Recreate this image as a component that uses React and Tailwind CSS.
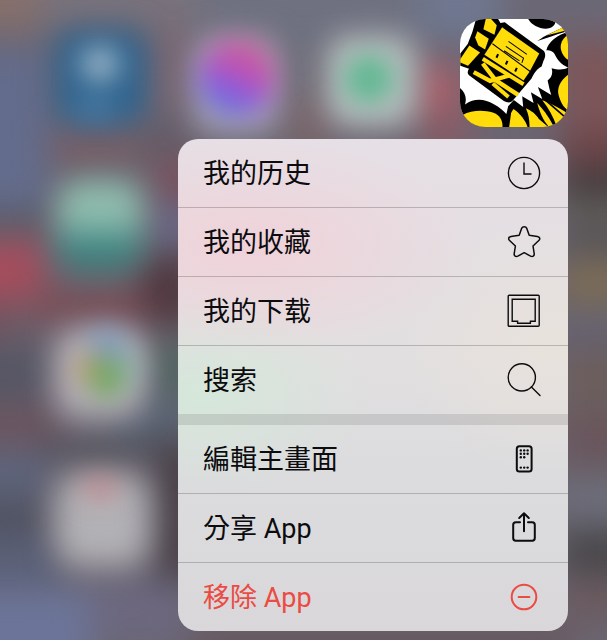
import React from "react";

// Wallpaper patches: [x, y, width, height, colour]
const patches = [
  [-60, -60, 100, 90, "#86706c"],
  [40, -60, 160, 90, "#78727c"],
  [200, -60, 220, 110, "#6f7180"],
  [420, -60, 80, 100, "#6f7890"],
  [500, -60, 170, 90, "#6b6875"],
  [-60, 50, 110, 160, "#636c8c"],
  [150, 30, 40, 80, "#7b6672"],
  [285, 50, 35, 60, "#71707c"],
  [290, 100, 40, 50, "#7d6668"],
  [415, 65, 45, 50, "#b0606a"],
  [420, 110, 50, 50, "#855c66"],
  [560, 40, 110, 90, "#7d5659"],
  [560, 130, 110, 40, "#6b4549"],
  [560, 170, 110, 30, "#403b3d"],
  [560, 200, 110, 25, "#6a655f"],
  [560, 225, 110, 25, "#4e4d54"],
  [560, 255, 110, 55, "#7a6b57"],
  [560, 310, 110, 35, "#646275"],
  [560, 345, 110, 70, "#6c5e5d"],
  [560, 415, 110, 55, "#69565c"],
  [560, 475, 110, 45, "#6c6e7a"],
  [560, 530, 110, 45, "#484649"],
  [560, 580, 110, 40, "#6b5a5e"],
  [50, 135, 95, 25, "#7c5c62"],
  [140, 120, 50, 35, "#625b66"],
  [155, 160, 60, 40, "#7c505b"],
  [150, 205, 50, 40, "#6a6688"],
  [140, 255, 60, 70, "#50383f"],
  [-60, 210, 110, 20, "#565860"],
  [-60, 240, 105, 60, "#a64c5c"],
  [35, 290, 110, 35, "#7a4c54"],
  [-60, 305, 80, 30, "#72505a"],
  [-60, 345, 110, 55, "#565664"],
  [-60, 405, 120, 40, "#6b545f"],
  [150, 345, 40, 45, "#4c645c"],
  [110, 395, 80, 45, "#5a6474"],
  [40, 440, 110, 20, "#505058"],
  [-60, 452, 110, 40, "#5c637b"],
  [-60, 500, 105, 35, "#4c5060"],
  [-60, 540, 120, 45, "#5a6078"],
  [155, 440, 50, 140, "#494047"],
  [-60, 590, 150, 110, "#6c7599"],
  [90, 580, 100, 60, "#6c687f"],
  [190, 625, 380, 60, "#67585f"],
];

function Wallpaper() {
  return (
    <svg
      className="absolute inset-0 h-full w-full"
      viewBox="0 0 607 640"
      preserveAspectRatio="xMidYMid slice"
      aria-hidden="true"
    >
      <defs>
        <filter id="far" x="-20%" y="-20%" width="140%" height="140%" colorInterpolationFilters="sRGB">
          <feGaussianBlur stdDeviation="17" />
        </filter>
        <filter id="near" x="-50%" y="-50%" width="200%" height="200%" colorInterpolationFilters="sRGB">
          <feGaussianBlur stdDeviation="15" />
        </filter>
        <filter id="detail" x="-50%" y="-50%" width="200%" height="200%" colorInterpolationFilters="sRGB">
          <feGaussianBlur stdDeviation="13" />
        </filter>
        <linearGradient id="orb" x1="0.75" y1="0" x2="0.25" y2="1">
          <stop offset="0" stopColor="#d05a90" />
          <stop offset="0.4" stopColor="#c052b4" />
          <stop offset="0.65" stopColor="#8a5ae0" />
          <stop offset="1" stopColor="#5480e0" />
        </linearGradient>
        <linearGradient id="mint" x1="0" y1="0" x2="0" y2="1">
          <stop offset="0" stopColor="#92bfb0" />
          <stop offset="0.5" stopColor="#8dbaac" />
          <stop offset="0.65" stopColor="#478c89" />
          <stop offset="1" stopColor="#387a76" />
        </linearGradient>
      </defs>
      <rect width="607" height="640" fill="#6b6672" />
      <g filter="url(#far)">
        {patches.map(([x, y, w, h, fill]) => (
          <rect key={`${x}-${y}`} x={x} y={y} width={w} height={h} fill={fill} />
        ))}
      </g>
      <g filter="url(#near)">
        <rect x="55" y="30" width="92" height="94" rx="20" fill="#2f648f" />
        <rect x="192" y="35" width="88" height="100" rx="24" fill="#a49eb2" />
        <rect x="326" y="35" width="91" height="92" rx="24" fill="#b9bfc0" />
        <rect x="57" y="180" width="86" height="90" rx="24" fill="url(#mint)" />
        <rect x="55" y="328" width="90" height="90" rx="24" fill="#b5b0b8" />
        <rect x="56" y="474" width="93" height="92" rx="24" fill="#b2b1b5" />
      </g>
      <g filter="url(#detail)">
        <ellipse cx="100" cy="64" rx="20" ry="18" fill="#96b2c6" />
        <ellipse cx="95" cy="108" rx="22" ry="9" fill="#4f80aa" />
        <circle cx="237" cy="78" r="38" fill="url(#orb)" />
        <circle cx="369" cy="79" r="25" fill="#60b892" />
        <ellipse cx="107" cy="344" rx="18" ry="14" fill="#7c98bc" />
        <ellipse cx="87" cy="369" rx="12" ry="15" fill="#bd9c66" />
        <ellipse cx="107" cy="378" rx="17" ry="21" fill="#72a85e" />
        <ellipse cx="130" cy="366" rx="9" ry="20" fill="#8aaeaa" />
        <ellipse cx="100" cy="488" rx="17" ry="8" fill="#d08286" />
      </g>
    </svg>
  );
}

function ComicLogo() {
  return (
    <svg viewBox="60 57 323 323" className="block h-full w-full" role="img" aria-label="App">
      <rect x="60" y="57" width="323" height="323" fill="#fff" />
      {/* burst, top right */}
      <path d="M264 57H346C346 68 344 78 329 84C307 91 275 78 264 57Z" fill="#000" />
      <path d="M348 57H383V76C366 80 353 72 348 57Z" fill="#ffdc0a" />
      <path d="M291 123C316 104 345 94 372 80L374 96C346 103 320 115 291 123Z" fill="#000" />
      <path d="M318 106L372 80L374 92Z" fill="#ffdc0a" />
      <path d="M383 96C352 104 324 125 318 151C329 150 337 153 343 162C350 178 363 194 383 202Z" fill="#000" />
      <path d="M383 105C367 113 358 133 362 149C366 164 374 174 383 179Z" fill="#ffdc0a" />
      {/* burst, lower right */}
      <path d="M383 202C368 211 350 208 334 204C339 221 333 233 322 241C326 258 328 270 333 284L293 260L306 296L272 276L280 308L246 288L249 320L221 299L204 318L190 380H383Z" fill="#000" />
      <g fill="#ffdc0a">
        <path d="M383 224C361 241 349 263 355 285C360 304 369 321 383 330Z" />
        <path d="M220 326C206 344 203 362 206 380H262C256 360 240 340 220 326Z" />
        <path d="M257 324C274 332 286 340 296 356L324 380H268C268 358 265 342 257 324Z" />
        <path d="M291 308C306 324 324 346 338 374L326 380C306 356 298 334 291 308Z" />
        <path d="M306 300C334 310 362 326 383 340V380H350C338 348 324 322 306 300Z" />
      </g>
      <path d="M314 298L376 352" stroke="#000" strokeWidth="5" />
      {/* burst, lower left */}
      <path d="M60 263C75 275 81 293 75 313C105 291 136 298 160 311C179 321 191 332 199 342L216 316L207 380H60Z" fill="#000" />
      <path d="M68 344C94 329 132 328 158 337C180 345 188 361 187 380H60V354Z" fill="#ffdc0a" />
      {/* lettering block */}
      <path d="M108 57H174L181 69L194 67L309 151C317 157 316 171 310 181L304 199C289 207 282 218 274 235L216 303C209 309 199 306 191 302L88 226C81 220 82 213 87 206L61 197V160L83 132L97 96Z" fill="#000" />
      <g fill="#ffdc0a">
        <path d="M137 57H153L170 76L163 104L130 88Z" />
        <path d="M112 94L146 116L135 148L115 136L105 112Z" />
        <path d="M88 136L120 157L84 197L61 187V177Z" />
        <path d="M186 82L297 160L268 215L250 241L133 164Z" />
      </g>
      {/* lower strokes of the lettering */}
      <g stroke="#ffdc0a" fill="none">
        <path d="M128 176L250 252" strokeWidth="12" />
        <path d="M101 216L150 242L208 226" strokeWidth="13" />
        <path d="M128 190L166 240L234 284" strokeWidth="13" />
        <path d="M158 250L205 290" strokeWidth="12" />
      </g>
      <g stroke="#000" strokeWidth="3" fill="none">
        <path d="M157 131L270 214M205 124L260 163M197 139L250 174L245 188M192 152L238 182" />
        <path d="M174 162L169 173M202 182L197 193M230 203L225 214" strokeWidth="6" />
      </g>
    </svg>
  );
}

const line = { fill: "none", stroke: "currentColor", strokeLinecap: "round", strokeLinejoin: "round" };

const ClockIcon = () => (
  <svg viewBox="0 0 36 36" className="size-9" strokeWidth="1.4" {...line}>
    <circle cx="18" cy="18" r="15.6" />
    <path d="M18 7.5V19H25.5" strokeLinecap="butt" strokeLinejoin="miter" />
  </svg>
);
const StarIcon = () => (
  <svg viewBox="0 0 36 36" className="size-9" strokeWidth="1.5" {...line}>
    <path d="M15.6 4.4C16.6 2.2 19.8 2.2 20.8 4.4L23.2 11.3L31.4 12.4C33.9 12.8 34.4 15 32.8 16.5L27 22L28.2 29.6C28.5 32 26.6 33.1 24.6 32.1L18.2 28.7L11.8 32.1C9.8 33.1 7.9 32 8.2 29.6L9.4 22L3.6 16.5C2 15 2.5 12.8 5 12.4L13.2 11.3Z" />
  </svg>
);
const DownloadsIcon = () => (
  <svg viewBox="0 0 36 36" className="size-9" strokeWidth="1.4" {...line}>
    <rect x="2.2" y="2.2" width="31" height="31" rx="1" />
    <path d="M6.2 6.2H29.2V28.2H24.4V30.2H11.6V28.2H6.2Z" strokeLinejoin="miter" />
  </svg>
);
const SearchIcon = () => (
  <svg viewBox="0 0 36 36" className="size-9" strokeWidth="1.4" {...line}>
    <circle cx="15.8" cy="15.4" r="13.6" />
    <path d="M25.4 25L34 33.6" />
  </svg>
);
const PhoneIcon = () => (
  <svg viewBox="0 0 36 36" className="size-9" fill="currentColor">
    <rect x="10.8" y="5.2" width="14.8" height="25.4" rx="2.6" fill="none" stroke="currentColor" strokeWidth="2" />
    {[
      [14.8, 9.4], [18.2, 9.4], [21.6, 9.4],
      [14.8, 12.8], [18.2, 12.8], [21.6, 12.8],
      [14.8, 16.2], [18.2, 16.2],
      [14.8, 26.6], [18.2, 26.6], [21.6, 26.6],
    ].map(([x, y]) => (
      <circle key={`${x}-${y}`} cx={x} cy={y} r="1.2" />
    ))}
  </svg>
);
const ShareIcon = () => (
  <svg viewBox="0 0 36 36" className="size-9" strokeWidth="2" {...line}>
    <path d="M14 12.2H9.8C8.2 12.2 7.2 13.2 7.2 14.8V28C7.2 29.8 8.2 30.8 9.8 30.8H26.2C27.8 30.8 28.8 29.8 28.8 28V14.8C28.8 13.2 27.8 12.2 26.2 12.2H22" />
    <path d="M18 21.2V3.4M13.2 8L18 3.2L22.8 8" />
  </svg>
);
const RemoveIcon = () => (
  <svg viewBox="0 0 36 36" className="size-9" strokeWidth="2" {...line}>
    <circle cx="18" cy="18" r="12.3" />
    <path d="M12.6 18H23.4" />
  </svg>
);

const shortcuts = [
  { label: "我的历史", Icon: ClockIcon },
  { label: "我的收藏", Icon: StarIcon },
  { label: "我的下载", Icon: DownloadsIcon },
  { label: "搜索", Icon: SearchIcon },
];
const systemActions = [
  { label: "編輯主畫面", Icon: PhoneIcon },
  { label: "分享 App", Icon: ShareIcon },
  { label: "移除 App", Icon: RemoveIcon, danger: true },
];

function MenuGroup({ items, lang, font }) {
  return (
    <div role="group" lang={lang} className={`divide-y divide-black/20 ${font}`}>
      {items.map(({ label, Icon, danger }) => (
        <button
          key={label}
          type="button"
          role="menuitem"
          className={`box-content flex h-[68px] w-full items-center ${danger ? "text-[#eb4b42]" : "text-[#0c0c0e]"}`}
        >
          <span className="flex w-full items-center justify-between pl-[25px] pr-[26px]">
            <span className="pt-[2px] text-[27px] leading-9">{label}</span>
            <Icon />
          </span>
        </button>
      ))}
    </div>
  );
}

export default function App() {
  return (
    <main className="relative min-h-screen overflow-hidden bg-[#6b6672]">
      <Wallpaper />
      <div className="relative flex flex-col items-end gap-3 pb-[9px] pl-4 pr-[39px] pt-[19px]">
        <button type="button" className="size-[108px] overflow-hidden rounded-[25px]">
          <ComicLogo />
        </button>
        <div
          role="menu"
          className="w-full max-w-[390px] overflow-hidden rounded-[20px] bg-[#dddcde] bg-[radial-gradient(ellipse_230px_110px_at_18%_22%,#f0d2d9_0%,#f0d2d900_100%),radial-gradient(ellipse_170px_100px_at_6%_52%,#d5e7da_0%,#d5e7da00_100%),radial-gradient(ellipse_150px_130px_at_96%_42%,#e8e2dc_0%,#e8e2dc00_100%),linear-gradient(180deg,#e6dfe5_0%,#e2dfe0_45%,#dcdcde_65%,#d9d7d9_100%)]"
        >
          <MenuGroup
            items={shortcuts}
            lang="zh-Hans"
            font="font-['Roboto','Noto_Sans_CJK_SC',sans-serif]"
          />
          <div role="separator" className="h-[11px] bg-black/10" />
          <MenuGroup
            items={systemActions}
            lang="zh-Hant"
            font="font-['Roboto','Noto_Sans_CJK_TC',sans-serif]"
          />
        </div>
      </div>
    </main>
  );
}
